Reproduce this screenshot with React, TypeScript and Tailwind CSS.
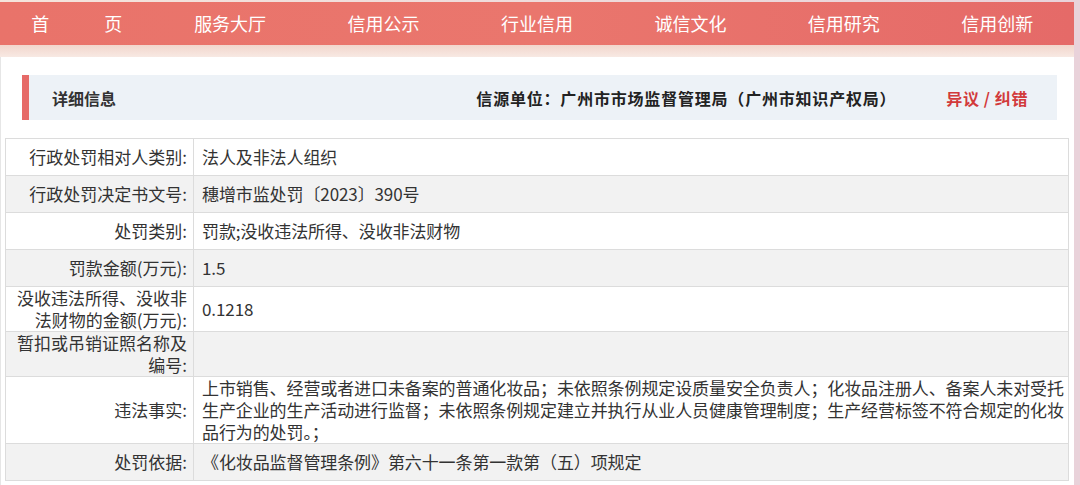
import React from "react";

const navItems = ["服务大厅", "信用公示", "行业信用", "诚信文化", "信用研究", "信用创新"];

type Row = { label: React.ReactNode; value: React.ReactNode; grey?: boolean };

const rows: Row[] = [
  { label: "行政处罚相对人类别:", value: "法人及非法人组织" },
  { label: "行政处罚决定书文号:", value: "穗增市监处罚〔2023〕390号", grey: true },
  { label: "处罚类别:", value: "罚款;没收违法所得、没收非法财物" },
  { label: "罚款金额(万元):", value: "1.5", grey: true },
  { label: "没收违法所得、没收非法财物的金额(万元):", value: "0.1218" },
  { label: "暂扣或吊销证照名称及编号:", value: "", grey: true },
  {
    label: "违法事实:",
    value:
      "上市销售、经营或者进口未备案的普通化妆品；未依照条例规定设质量安全负责人；化妆品注册人、备案人未对受托生产企业的生产活动进行监督；未依照条例规定建立并执行从业人员健康管理制度；生产经营标签不符合规定的化妆品行为的处罚。；",
  },
  { label: "处罚依据:", value: "《化妆品监督管理条例》第六十一条第一款第（五）项规定", grey: true },
];

export default function App() {
  return (
    <div
      className="w-[1080px] h-[485px] overflow-hidden bg-gradient-to-r from-[#f5e4dc] to-[#e9d2da] text-[#333]"
      style={{ fontFamily: '"Noto Sans CJK SC", "Noto Sans", sans-serif' }}
    >
      <div className="w-[1074px] pt-[2px]">
        {/* Top navigation */}
        <nav className="grid h-[43px] grid-cols-7 items-center bg-gradient-to-r from-[#e9736a] via-[#ea766d] to-[#e56a68] text-[18px] text-white">
          <div className="flex justify-center gap-[55px]">
            <span>首</span>
            <span>页</span>
          </div>
          {navItems.map((item) => (
            <div key={item} className="text-center">
              {item}
            </div>
          ))}
        </nav>
        <div className="h-[12px] bg-gradient-to-b from-[#f2d6cc] to-[#f8e9e3]" />

        {/* Content panel */}
        <div className="h-[440px] bg-white pt-[18px] border-l border-[#e6e6e6]">
          <div className="ml-[21px] mr-[17px] flex h-[45px] items-center border-l-[7px] border-[#e66a68] bg-[#edf2f7] pl-[23px] pr-[29px] text-[16px] font-bold">
            <span className="text-[#333]">详细信息</span>
            <span className="ml-auto tracking-[0.8px] text-[#222]">
              信源单位：广州市市场监督管理局（广州市知识产权局）
            </span>
            <span className="ml-[50px] tracking-[0.6px] text-[#d23a3b]">异议 / 纠错</span>
          </div>

          <table className="mt-[18px] ml-[4px] w-[1064px] table-fixed border-collapse text-[17px]">
            <colgroup>
              <col className="w-[188px]" />
              <col />
            </colgroup>
            <tbody>
              {rows.map((row, i) => (
                <tr key={i} className={row.grey ? "bg-[#f2f2f2]" : "bg-white"}>
                  <td className="h-[37px] border border-[#dcdcdc] py-0 pl-[8px] pr-[6px] text-right align-middle leading-[22px]">
                    {row.label}
                  </td>
                  <td className="h-[37px] border border-[#dcdcdc] py-0 pl-[8px] pr-0 align-middle leading-[22px] tracking-[-0.1px]">
                    {row.value}
                  </td>
                </tr>
              ))}
            </tbody>
          </table>
        </div>
      </div>
    </div>
  );
}
